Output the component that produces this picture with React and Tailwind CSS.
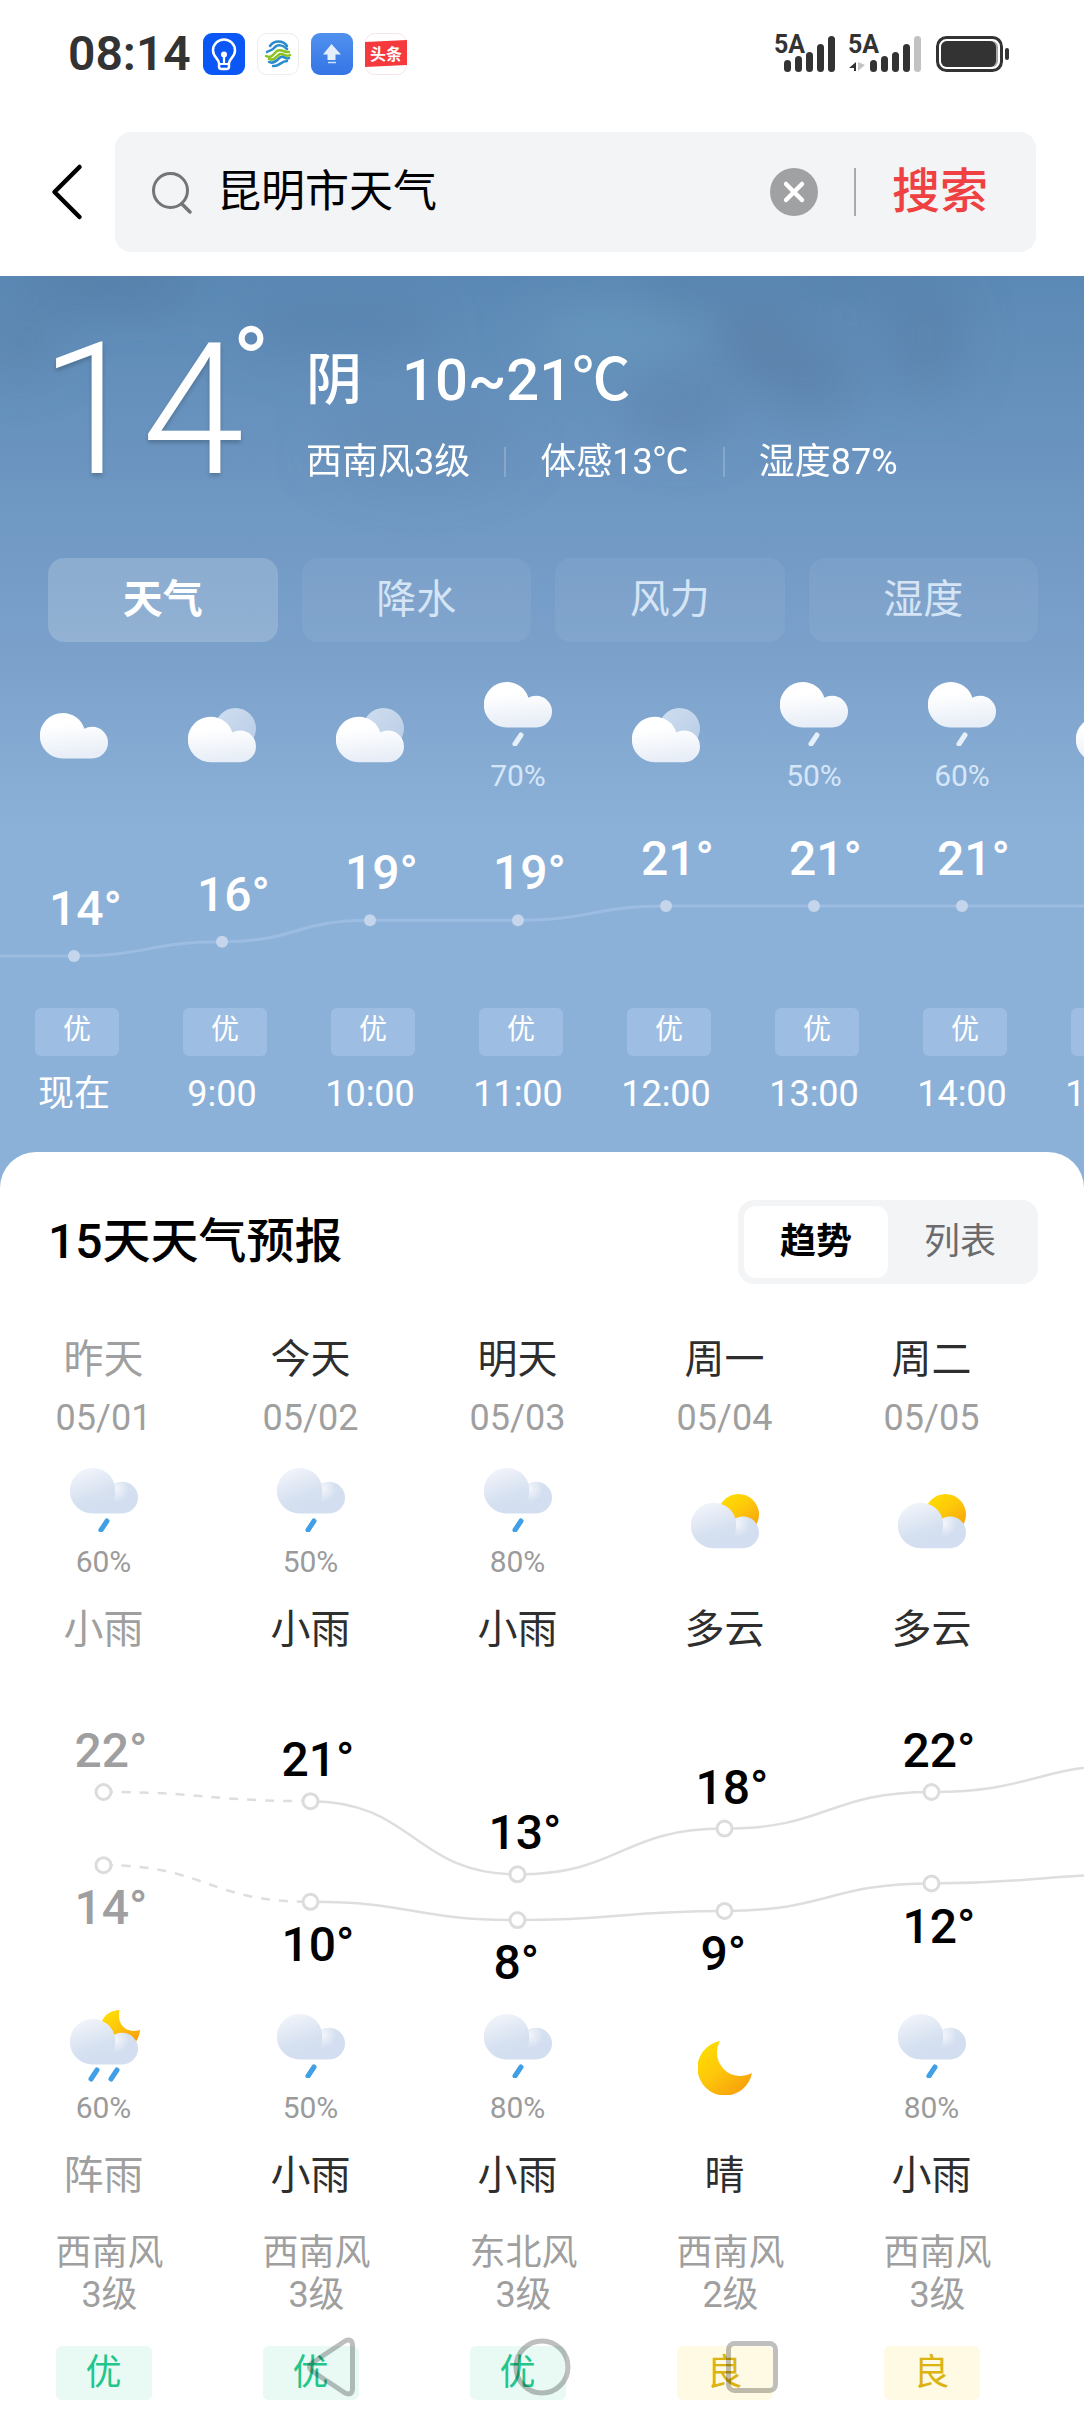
import { useState } from 'react';

const HOUR_W = 148;
const DAY_W = 207;

const hours = [
  { time: '现在', temp: 14, icon: 'cloudy', air: '优' },
  { time: '9:00', temp: 16, icon: 'partly', air: '优' },
  { time: '10:00', temp: 19, icon: 'partly', air: '优' },
  { time: '11:00', temp: 19, icon: 'rain', chance: '70%', air: '优' },
  { time: '12:00', temp: 21, icon: 'partly', air: '优' },
  { time: '13:00', temp: 21, icon: 'rain', chance: '50%', air: '优' },
  { time: '14:00', temp: 21, icon: 'rain', chance: '60%', air: '优' },
  { time: '15:00', temp: 21, icon: 'partly', air: '优' },
];

const days = [
  { name: '昨天', date: '05/01', high: 22, low: 14, past: true, day: { icon: 'rain', chance: '60%', text: '小雨' }, night: { icon: 'moonRain', chance: '60%', text: '阵雨' }, wind: '西南风', level: '3级', air: '优' },
  { name: '今天', date: '05/02', high: 21, low: 10, day: { icon: 'rain', chance: '50%', text: '小雨' }, night: { icon: 'rain', chance: '50%', text: '小雨' }, wind: '西南风', level: '3级', air: '优' },
  { name: '明天', date: '05/03', high: 13, low: 8, day: { icon: 'rain', chance: '80%', text: '小雨' }, night: { icon: 'rain', chance: '80%', text: '小雨' }, wind: '东北风', level: '3级', air: '优' },
  { name: '周一', date: '05/04', high: 18, low: 9, day: { icon: 'partly', text: '多云' }, night: { icon: 'moon', text: '晴' }, wind: '西南风', level: '2级', air: '良' },
  { name: '周二', date: '05/05', high: 22, low: 12, day: { icon: 'partly', text: '多云' }, night: { icon: 'rain', chance: '80%', text: '小雨' }, wind: '西南风', level: '3级', air: '良' },
];

// the lines run on towards the next day, which is off screen
const nextDay = { high: 25, low: 13 };

const curve = (a, b) => {
  const mid = (a.x + b.x) / 2;
  return `M${a.x} ${a.y}C${mid} ${a.y} ${mid} ${b.y} ${b.x} ${b.y}`;
};

/* ---------- weather icons ---------- */

const IconDefs = () => (
  <svg width="0" height="0" className="absolute" aria-hidden="true">
    <defs>
      <linearGradient id="whiteCloud" x1="0" y1="0" x2="0.15" y2="1">
        <stop offset="0.3" stopColor="#ffffff" />
        <stop offset="1" stopColor="#e8eef7" />
      </linearGradient>
      <linearGradient id="paleSun" x1="0" y1="0" x2="1" y2="1">
        <stop offset="0" stopColor="#cfdef0" />
        <stop offset="1" stopColor="#b9cce6" />
      </linearGradient>
      <linearGradient id="blueCloud" gradientUnits="userSpaceOnUse" x1="16" y1="0" x2="30" y2="38">
        <stop offset="0" stopColor="#f1f4fa" />
        <stop offset="0.75" stopColor="#d5e0f0" />
        <stop offset="1" stopColor="#d3dff0" />
      </linearGradient>
      <radialGradient id="puffLight" gradientUnits="userSpaceOnUse" cx="46" cy="21" r="13">
        <stop offset="0" stopColor="#f6f8fc" stopOpacity="0.9" />
        <stop offset="1" stopColor="#f6f8fc" stopOpacity="0" />
      </radialGradient>
      <linearGradient id="gold" x1="0.1" y1="0" x2="0.9" y2="1">
        <stop offset="0" stopColor="#ffe000" />
        <stop offset="0.45" stopColor="#fdc80a" />
        <stop offset="1" stopColor="#f79a0c" />
      </linearGradient>
    </defs>
  </svg>
);

const cloudPath = 'M22.500 0C33 0 42 6.500 44.300 15.800C46.500 14.600 49.300 13.800 52.200 13.800A15.800 15.800 0 0 1 52.200 45.400H22.500A22.700 22.700 0 0 1 22.500 0Z';

const Puff = ({ light }) => (
  <>
    <path d={cloudPath} fill={light ? 'url(#whiteCloud)' : 'url(#blueCloud)'} />
    {!light && <path d="M44.300 15.800C45.600 21 45.400 28 43 34H62V16L52.200 13.800C49.300 13.800 46.500 14.600 44.300 15.800Z" fill="url(#puffLight)" />}
  </>
);

const Drop = ({ x, y, light }) => (
  <path d={`M${x + 6} ${y + 2}L${x} ${y + 11}`} stroke={light ? '#e6f0fa' : '#409fe5'} strokeWidth="5" strokeLinecap="round" />
);

const WeatherIcon = ({ type, light }) => {
  if (type === 'cloudy') {
    return (
      <svg width="68" height="46" viewBox="0 0 68 46" fill="none">
        <Puff light={light} />
      </svg>
    );
  }
  if (type === 'partly') {
    return (
      <svg width="68" height="56" viewBox="0 0 68 56" fill="none">
        <circle cx="47.500" cy="20.500" r="20.500" fill={light ? 'url(#paleSun)' : 'url(#gold)'} />
        <g transform="translate(0 8.800)"><Puff light={light} /></g>
      </svg>
    );
  }
  if (type === 'rain') {
    return (
      <svg width="68" height="64" viewBox="0 0 68 64" fill="none">
        <Puff light={light} />
        <Drop x={31} y={51} light={light} />
      </svg>
    );
  }
  if (type === 'moonRain') {
    return (
      <svg width="68" height="64" viewBox="0 4 68 64" fill="none" className="overflow-visible">
        <path d="M49.500 0C46.500 13 55 24.500 70 20C69.500 25 68 29 65 33L44 26L32 11C35 4 42 0.500 49.500 0Z" fill="url(#gold)" />
        <g transform="translate(0 9)"><Puff light={light} /></g>
        <Drop x={21} y={58} light={light} />
        <Drop x={41} y={58} light={light} />
      </svg>
    );
  }
  return (
    <svg width="54" height="54" viewBox="0 0 54 54" fill="none">
      <path d="M22 0A27.500 27.500 0 1 0 54 32A23.500 23.500 0 0 1 22 0Z" fill="url(#gold)" />
    </svg>
  );
};

/* ---------- status bar ---------- */

const Signal = ({ weak }) => {
  const tops = [24, 20, 16, 8, 0];
  const start = weak ? 22 : 10;
  return (
    <svg width={weak ? 74 : 62} height="38" viewBox={weak ? '0 0 74 38' : '0 0 62 38'} fill="#333" className="overflow-visible">
      <text x="0" y="18" fontSize="25" fontWeight="700">5A</text>
      {weak && (
        <>
          <path d="M8 27V36H6V33H1Z" />
          <path d="M10 27V36L17 30Z" fill="#c2c2c2" />
        </>
      )}
      {tops.map((top, i) => (
        <rect key={top} x={start + i * 11} y={top + 1} width="7" height={36 - top} rx="3.500" fill={weak && i === 4 ? '#c2c2c2' : '#333'} />
      ))}
    </svg>
  );
};

const StatusBar = () => (
  <div className="flex h-[108px] items-center justify-between pl-[68px] pr-[74px]">
    <div className="flex items-center gap-3">
      <span className="text-[48px] leading-[56px] font-semibold text-[#333]">08:14</span>
      <svg width="42" height="42" viewBox="0 0 42 42" fill="none">
        <rect width="42" height="42" rx="9" fill="#0b57f5" />
        <path d="M16 30C16 26 10 24 10 17.500A11 11 0 0 1 32 17.500C32 24 26 26 26 30V33.500Q26 36 23.500 36H18.500Q16 36 16 33.500Z" stroke="#fff" strokeWidth="2.500" />
        <path d="M16 31H26M21 31V22" stroke="#fff" strokeWidth="2.200" />
        <circle cx="21" cy="21.500" r="3" fill="#fff" />
      </svg>
      <svg width="42" height="42" viewBox="0 0 42 42" fill="none" strokeLinecap="round">
        <rect x="0.500" y="0.500" width="41" height="41" rx="9" fill="#fff" stroke="#ececec" />
        <path d="M13 13C17 7 26 7 30 13" stroke="#2a8ccb" strokeWidth="2.500" />
        <path d="M10 19C13 17 15 18 18 14C21 11 26 12 30 16" stroke="#2a8ccb" strokeWidth="2.500" />
        <path d="M9 23C15 26 17 20 20 18C24 15 27 20 32 19" stroke="#8cc21f" strokeWidth="2.500" />
        <path d="M12 26C17 29 20 22 23 21C27 20 28 25 33 22" stroke="#8cc21f" strokeWidth="2.500" />
        <path d="M12 29C18 32 21 25 24 24C27 23 29 27 32 25" stroke="#2a8ccb" strokeWidth="2.500" />
        <path d="M16 33C22 34 24 28 30 28" stroke="#2a8ccb" strokeWidth="2.500" />
      </svg>
      <svg width="42" height="42" viewBox="0 0 42 42">
        <defs>
          <linearGradient id="appBlue" x1="0" y1="0" x2="0" y2="1">
            <stop stopColor="#5091ee" />
            <stop offset="1" stopColor="#3474e6" />
          </linearGradient>
        </defs>
        <rect width="42" height="42" rx="9" fill="url(#appBlue)" />
        <path d="M20.500 11L30 21.500H24.500V27H16.500V21.500H12Z" fill="#e4eefc" />
        <path d="M17 29.500H25" stroke="#cfe0fa" strokeWidth="1.500" />
      </svg>
      <svg width="42" height="42" viewBox="0 0 42 42">
        <rect x="0.500" y="0.500" width="41" height="41" rx="9" fill="#fff" stroke="#f8e4e4" />
        <path d="M0 9L42 7V32L0 34Z" fill="#f5393c" />
        <text x="5" y="27" fontSize="16" fontWeight="700" fill="#fff">头条</text>
      </svg>
    </div>
    <div className="flex items-center gap-3">
      <Signal />
      <Signal weak />
      <svg width="76" height="38" viewBox="0 0 76 38">
        <rect x="3.500" y="2.500" width="64" height="33" rx="9" fill="#fff" stroke="#333" strokeWidth="3" />
        <rect x="7" y="6" width="57" height="26" rx="6" fill="#a9a9a9" />
        <rect x="7" y="6" width="55" height="26" rx="6" fill="#333" />
        <rect x="71" y="13" width="4" height="12" rx="2" fill="#333" />
      </svg>
    </div>
  </div>
);

const SearchBar = () => {
  const [query, setQuery] = useState('昆明市天气');
  return (
    <form className="flex items-center pt-6 pr-12 pb-6 pl-12" onSubmit={(e) => e.preventDefault()}>
      <button type="button" aria-label="返回" className="w-[67px] shrink-0">
        <svg width="38" height="60" viewBox="0 0 38 60" fill="none" stroke="#000" strokeWidth="4.500" strokeLinecap="round" strokeLinejoin="round">
          <path d="M31.500 5L6.500 30L31.500 55" />
        </svg>
      </button>
      <div className="flex h-[120px] min-w-0 flex-1 items-center rounded-2xl bg-[#f3f4f6] pr-12 pl-9">
        <svg width="42" height="46" viewBox="0 0 42 46" fill="none" stroke="#747577" strokeWidth="3" strokeLinecap="round" className="shrink-0">
          <circle cx="19.500" cy="21.500" r="17" />
          <path d="M31 35L39 43" strokeWidth="3.500" />
        </svg>
        <input
          aria-label="搜索"
          value={query}
          onChange={(e) => setQuery(e.target.value)}
          className="ml-6 min-w-0 flex-1 bg-transparent text-[44px] leading-[68px] text-black outline-none"
        />
        <button type="button" aria-label="清除" onClick={() => setQuery('')} className="flex size-12 shrink-0 items-center justify-center rounded-full bg-[#a0a1a3]">
          <svg width="24" height="24" viewBox="0 0 24 24" stroke="#fff" strokeWidth="4.500" strokeLinecap="round">
            <path d="M4 4L20 20M20 4L4 20" />
          </svg>
        </button>
        <span className="ml-9 h-12 w-0.5 bg-[#a9aaac]" />
        <button type="submit" className="ml-9 shrink-0 text-[48px] leading-[68px] font-medium text-[#f04142]">搜索</button>
      </div>
    </form>
  );
};

/* ---------- current weather ---------- */

const SkyClouds = () => (
  <svg className="absolute inset-x-0 top-0 h-[280px] w-full" viewBox="0 0 1084 280" preserveAspectRatio="none" aria-hidden="true">
    <defs>
      <filter id="soft" x="-50%" y="-50%" width="200%" height="200%">
        <feGaussianBlur stdDeviation="24" />
      </filter>
    </defs>
    <g filter="url(#soft)">
      <ellipse cx="110" cy="10" rx="90" ry="18" fill="#4f7298" opacity="0.5" />
      <ellipse cx="20" cy="70" rx="40" ry="30" fill="#57799f" opacity="0.35" />
      <ellipse cx="340" cy="50" rx="110" ry="30" fill="#5880ab" opacity="0.5" />
      <ellipse cx="620" cy="60" rx="90" ry="30" fill="#6b9bbe" opacity="0.6" />
      <ellipse cx="680" cy="15" rx="40" ry="18" fill="#4f77a0" opacity="0.45" />
      <ellipse cx="755" cy="60" rx="36" ry="40" fill="#587ba1" opacity="0.6" />
      <ellipse cx="810" cy="100" rx="50" ry="40" fill="#587aa2" opacity="0.5" />
      <ellipse cx="840" cy="5" rx="50" ry="12" fill="#4f7197" opacity="0.5" />
      <ellipse cx="925" cy="60" rx="40" ry="60" fill="#567ca6" opacity="0.5" />
      <ellipse cx="680" cy="130" rx="50" ry="40" fill="#587ba5" opacity="0.4" />
      <ellipse cx="420" cy="170" rx="100" ry="40" fill="#5f86b0" opacity="0.35" />
    </g>
  </svg>
);

const Divider = () => <span className="mx-[34px] h-[30px] w-0.5 bg-white/20" />;

const CurrentWeather = () => (
  <div className="relative flex items-start pt-12 pl-10 text-white">
    <h1 className="flex w-[266px] shrink-0">
      <span className="text-[184px] leading-[172px] font-light [text-shadow:0_3px_4px_rgb(0_0_0/0.2)]">14</span>
      <span className="-ml-3 text-[100px] leading-[80px]">°</span>
    </h1>
    <div className="pt-6">
      <div className="flex items-center gap-10 leading-[64px] font-medium">
        <span className="text-[56px]">阴</span>
        <span className="text-[58px]">10~21℃</span>
      </div>
      <div className="mt-6 flex items-center text-[36px] leading-[52px]">
        <span>西南风3级</span>
        <Divider />
        <span>体感13℃</span>
        <Divider />
        <span>湿度87%</span>
      </div>
    </div>
  </div>
);

const Tabs = () => {
  const tabs = ['天气', '降水', '风力', '湿度'];
  const [active, setActive] = useState('天气');
  return (
    <div className="relative mt-[62px] grid grid-cols-4 gap-6 pr-[46px] pl-12">
      {tabs.map((tab) => (
        <button
          key={tab}
          type="button"
          onClick={() => setActive(tab)}
          className={`h-21 rounded-2xl text-[40px] leading-[56px] ${active === tab ? 'bg-white/18 font-bold text-white' : 'bg-white/6 text-[#d5e5f5]'}`}
        >
          {tab}
        </button>
      ))}
    </div>
  );
};

const IconCell = ({ icon, chance, light }) => (
  <div className="flex h-29 flex-col items-center justify-center">
    <WeatherIcon type={icon} light={light} />
    {chance && <span className={`mt-4 text-[30px] leading-7 ${light ? 'text-[#d5e6f8]' : 'text-[#9b9b9b]'}`}>{chance}</span>}
  </div>
);

const HourlyChart = () => {
  const points = hours.map((hour, i) => ({ x: HOUR_W * (i + 0.5), y: 162 - (hour.temp - 14) * 7.15 }));
  const width = HOUR_W * hours.length;
  return (
    <svg width={width} height="214" viewBox={`0 0 ${width} 214`} className="block">
      <g fill="none" stroke="#9cbce2" strokeWidth="3">
        <path d={`M0 ${points[0].y}H${points[0].x}`} />
        {points.slice(1).map((p, i) => <path key={p.x} d={curve(points[i], p)} />)}
      </g>
      {points.slice(0, 7).map((p, i) => (
        <g key={p.x}>
          <circle cx={p.x} cy={p.y} r="6" fill="#c5d6ec" />
          <text x={p.x - 25} y={p.y - 31} fontSize="48" fontWeight="500" fill="#fff">{hours[i].temp}°</text>
        </g>
      ))}
    </svg>
  );
};

const Hourly = () => (
  <div className="relative mt-9 overflow-hidden text-white">
    <div className="flex">
      {hours.map((hour) => (
        <div key={hour.time} className="w-[148px] shrink-0">
          <IconCell icon={hour.icon} chance={hour.chance} light />
        </div>
      ))}
    </div>
    <HourlyChart />
    <div className="flex">
      {hours.map((hour) => (
        <div key={hour.time} className="flex w-[148px] shrink-0 flex-col items-center">
          <span className="ml-1.5 h-12 w-21 rounded-md bg-[#9dbee2] text-center text-[28px] leading-[44px]">{hour.air}</span>
          <span className="mt-3 text-[36px] leading-[52px]">{hour.time}</span>
        </div>
      ))}
    </div>
  </div>
);

/* ---------- 15 day forecast ---------- */

const DailyChart = () => {
  const toY = (t) => 136 + (22 - t) * 9.15;
  const all = [...days, nextDay];
  const highs = all.map((d, i) => ({ x: DAY_W * (i + 0.5), y: toY(d.high), t: d.high }));
  const lows = all.map((d, i) => ({ x: DAY_W * (i + 0.5), y: toY(d.low), t: d.low }));
  const labelX = (p) => p.x - (p.t < 10 ? 24 : 29);

  return (
    <svg width={DAY_W * 6} height="354" viewBox={`0 0 ${DAY_W * 6} 354`} className="block">
      {[highs, lows].map((line, n) => (
        <g key={n} fill="none" stroke="#dededf" strokeWidth="2.500">
          {line.slice(1).map((p, i) => (
            <path key={p.x} d={curve(line[i], p)} strokeDasharray={i === 0 ? '9 9' : undefined} />
          ))}
        </g>
      ))}
      {days.map((day, i) => (
        <g key={day.date} fontSize="48" fontWeight="500">
          <circle cx={highs[i].x} cy={highs[i].y} r="7.500" fill="#fff" stroke="#dcdcdf" strokeWidth="3" />
          <circle cx={lows[i].x} cy={lows[i].y} r="7.500" fill="#fff" stroke="#dcdcdf" strokeWidth="3" />
          <text x={labelX(highs[i])} y={highs[i].y - 25} fill={day.past ? '#9f9fa1' : '#000'}>{day.high}°</text>
          <text x={labelX(lows[i])} y={lows[i].y + 59} fill={day.past ? '#9f9fa1' : '#000'}>{day.low}°</text>
        </g>
      ))}
    </svg>
  );
};

const Forecast = () => {
  const [view, setView] = useState('趋势');
  return (
    <section className="overflow-hidden rounded-t-[36px] bg-white pt-12 pb-3">
      <div className="flex items-center justify-between pr-[46px] pl-12">
        <h2 className="text-[48px] leading-[68px] font-medium text-black">15天天气预报</h2>
        <div className="grid h-21 w-[300px] grid-cols-2 rounded-2xl bg-[#f3f4f6] p-1.5 text-[36px] leading-[52px]">
          {['趋势', '列表'].map((name) => (
            <button
              key={name}
              type="button"
              onClick={() => setView(name)}
              className={`rounded-xl ${view === name ? 'bg-white font-bold text-black' : 'text-[#6b6b6d]'}`}
            >
              {name}
            </button>
          ))}
        </div>
      </div>

      <div className="mt-12 flex">
        {days.map((day) => (
          <div key={day.date} className="w-[207px] shrink-0 text-center">
            <p className={`text-[40px] leading-[56px] ${day.past ? 'text-[#9f9f9f]' : 'text-[#2e2e2e]'}`}>{day.name}</p>
            <p className="mt-1 text-[36px] leading-[52px] text-[#9f9f9f]">{day.date}</p>
            <div className="mt-5">
              <IconCell icon={day.day.icon} chance={day.day.chance} />
            </div>
            <p className={`mt-6 text-[40px] leading-[52px] ${day.past ? 'text-[#9f9f9f]' : 'text-[#2e2e2e]'}`}>{day.day.text}</p>
          </div>
        ))}
      </div>

      <DailyChart />

      <div className="flex">
        {days.map((day) => (
          <div key={day.date} className="w-[207px] shrink-0 text-center">
            <IconCell icon={day.night.icon} chance={day.night.chance} />
            <p className={`mt-6 text-[40px] leading-[52px] ${day.past ? 'text-[#9f9f9f]' : 'text-[#2e2e2e]'}`}>{day.night.text}</p>
            <p className="mt-[30px] pl-3 text-[36px] leading-[42px] text-[#9f9f9f]">
              {day.wind}
              <br />
              {day.level}
            </p>
            <p className={`mx-auto mt-[30px] h-[54px] w-24 rounded-md text-[36px] leading-[54px] ${day.air === '优' ? 'bg-[#e9f9f4] text-[#23c68a]' : 'bg-[#fffae3] text-[#dcb412]'}`}>
              {day.air}
            </p>
          </div>
        ))}
      </div>
    </section>
  );
};

const NavButtons = () => (
  <nav className="fixed inset-x-0 bottom-0 flex h-[90px] items-center justify-center gap-[150px] text-black/25">
    <button type="button" aria-label="后退">
      <svg width="60" height="60" viewBox="0 0 60 60" fill="none" stroke="currentColor" strokeWidth="5" strokeLinejoin="round">
        <path d="M43 4Q50 1 50.500 8V52Q50 59 43 56L10 34Q5 30 10 26Z" />
      </svg>
    </button>
    <button type="button" aria-label="主页">
      <svg width="60" height="60" viewBox="0 0 60 60" fill="none" stroke="currentColor" strokeWidth="5">
        <circle cx="30" cy="30" r="26" />
      </svg>
    </button>
    <button type="button" aria-label="最近任务">
      <svg width="60" height="60" viewBox="0 0 60 60" fill="none" stroke="currentColor" strokeWidth="5">
        <rect x="6.500" y="6.500" width="47" height="47" rx="6" />
      </svg>
    </button>
  </nav>
);

const App = () => (
  <div className="min-h-screen overflow-hidden bg-white font-['Roboto','Noto_Sans_CJK_SC',sans-serif]">
    <IconDefs />
    <StatusBar />
    <SearchBar />
    <main className="bg-[#8cb1d8]">
      <section className="relative bg-linear-to-b from-[#5b89b5] via-[#7ba1cb] via-43% to-[#8cb1d8] to-63% pb-8">
        <SkyClouds />
        <CurrentWeather />
        <Tabs />
        <Hourly />
      </section>
      <Forecast />
    </main>
    <NavButtons />
  </div>
);

export default App;
